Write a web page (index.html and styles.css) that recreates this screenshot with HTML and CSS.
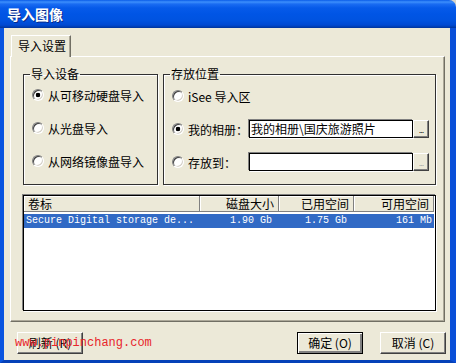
FILE: index.html
```html
<!DOCTYPE html>
<html lang="zh-CN">
<head>
<meta charset="utf-8">
<title>导入图像</title>
<link rel="stylesheet" href="styles.css">
</head>
<body>
<div class="window">
  <div class="titlebar"><span class="title">导入图像</span></div>
  <div class="client">
    <div class="tabs"><div class="tab">导入设置</div></div>
    <div class="panel">
      <div class="groups">
        <fieldset class="group g1">
          <legend>导入设备</legend>
          <div class="rows">
            <div class="row"><span class="rb checked"></span><span>从可移动硬盘导入</span></div>
            <div class="row"><span class="rb"></span><span>从光盘导入</span></div>
            <div class="row"><span class="rb"></span><span>从网络镜像盘导入</span></div>
          </div>
        </fieldset>
        <fieldset class="group g2">
          <legend>存放位置</legend>
          <div class="rows">
            <div class="row"><span class="rb"></span><span>iSee 导入区</span></div>
            <div class="row"><span class="rb checked"></span><span class="lbl">我的相册：</span><div class="field">我的相册\国庆旅游照片</div><div class="browse">...</div></div>
            <div class="row"><span class="rb"></span><span class="lbl">存放到：</span><div class="field"></div><div class="browse off">...</div></div>
          </div>
        </fieldset>
      </div>
      <div class="list">
        <div class="lhead">
          <div class="hc c1">卷标</div>
          <div class="hc c2">磁盘大小</div>
          <div class="hc c3">已用空间</div>
          <div class="hc c4">可用空间</div>
        </div>
        <div class="lrow sel">
          <div class="dc c1">Secure Digital storage de...</div>
          <div class="dc c2">1.90 Gb</div>
          <div class="dc c3">1.75 Gb</div>
          <div class="dc c4">161 Mb</div>
        </div>
      </div>
    </div>
    <div class="buttons">
      <div class="btn">刷新 (R)</div>
      <div class="right">
        <div class="btn def">确定 (O)</div>
        <div class="btn">取消 (C)</div>
      </div>
      <span class="watermark">www.pinpinchang.com</span>
    </div>
  </div>
</div>
</body>
</html>
```

FILE: styles.css
```css
html, body {
  margin: 0;
  padding: 0;
  background: #d8d4c8;
}
body {
  width: 456px;
  height: 363px;
  overflow: hidden;
  font-family: "Noto Sans CJK SC", "DejaVu Sans", sans-serif;
  font-size: 12px;
  color: #000;
}
.window {
  width: 456px;
  height: 363px;
  display: flex;
  flex-direction: column;
}
.titlebar {
  height: 28px;
  flex: none;
  border-top-right-radius: 7px;
  background: linear-gradient(to bottom, #0a5ce8 0, #3d8ffc 2px, #1a6cf2 4px, #065ae9 8px, #0055e5 14px, #0053e0 20px, #0049d2 25px, #003cb0 27px, #003399 28px);
  display: flex;
  align-items: center;
  padding-left: 7px;
}
.title {
  color: #fff;
  font-weight: bold;
  font-size: 14px;
  line-height: 16px;
  letter-spacing: 0;
  text-shadow: 1px 1px 0 #0a2a8a;
}
.client {
  flex: 1;
  background: #ece9d8;
  border-left: 4px solid #0a55e0;
  border-right: 6px solid #0a4fd8;
  border-bottom: 3px solid #0541b8;
  display: flex;
  flex-direction: column;
}
.tabs {
  display: flex;
  padding: 7px 0 0 7px;
}
.tab {
  position: relative;
  z-index: 1;
  width: 60px;
  height: 22px;
  margin-bottom: -1px;
  background: #ece9d8;
  border-left: 1px solid #fff;
  border-top: 1px solid #fff;
  border-right: 1px solid #716f64;
  box-shadow: inset -1px 0 0 #aca899;
  box-sizing: border-box;
  font-size: 12px;
  line-height: 20px;
  padding-left: 6px;
}
.panel {
  margin: 0 5px 0 6px;
  border-left: 1px solid #fff;
  border-top: 1px solid #fff;
  border-right: 1px solid #716f64;
  border-bottom: 1px solid #716f64;
  box-shadow: inset -1px -1px 0 #aca899;
  padding: 10px 8px 10px 12px;
}
.groups {
  display: flex;
  gap: 5px;
  height: 118px;
}
.group {
  margin: 0;
  padding: 0 0 0 8px;
  border: 1px solid #303030;
  box-shadow: 1px 1px 0 #fff, inset 1px 1px 0 #fff;
  min-width: 0;
  box-sizing: border-box;
}
.g1 { width: 135px; }
.g2 { width: 273px; }
legend {
  margin-left: -2px;
  padding: 0 1px;
  font-size: 12px;
  line-height: 14px;
}
.rows {
  display: flex;
  flex-direction: column;
  gap: 13px;
  padding-top: 4px;
}
.g2 .rows { padding-top: 5px; }
.row {
  height: 20px;
  display: flex;
  align-items: center;
  white-space: nowrap;
  font-size: 12px;
}
.rb {
  width: 12px;
  height: 12px;
  box-sizing: border-box;
  border-radius: 50%;
  border: 1px solid;
  border-color: #808080 #fff #fff #808080;
  box-shadow: inset 1px 1px 0 #404040, inset -1px -1px 0 #d4d0c8;
  background: #fff;
  margin-right: 4px;
  flex: none;
}
.rb.checked {
  background: radial-gradient(circle, #000 0, #000 2px, #fff 2.6px);
}
.lbl {
  width: 61px;
  flex: none;
}
.field {
  width: 164px;
  height: 18px;
  box-sizing: border-box;
  border: 1px solid #000;
  box-shadow: -1px -1px 0 #808080, 1px 1px 0 #fff;
  background: #fff;
  font-size: 12px;
  line-height: 16px;
  padding-left: 1px;
  overflow: hidden;
}
.browse {
  width: 16px;
  height: 18px;
  box-sizing: border-box;
  border: 1px solid;
  border-color: #fff #404040 #404040 #fff;
  box-shadow: inset -1px -1px 0 #808080;
  background: #ece9d8;
  font-family: "Liberation Sans", sans-serif;
  font-size: 9px;
  line-height: 18px;
  text-align: center;
  color: #000;
  letter-spacing: -1px;
}
.browse.off {
  color: #a0a0a0;
}
.list {
  margin-top: 10px;
  height: 116px;
  box-sizing: border-box;
  border: 1px solid #000;
  box-shadow: -1px -1px 0 #808080, 1px 1px 0 #fff;
  background: #fff;
}
.lhead {
  display: flex;
  height: 16px;
}
.hc {
  box-sizing: border-box;
  height: 16px;
  background: #ece9d8;
  border-right: 1px solid #808080;
  border-bottom: 1px solid #808080;
  box-shadow: inset 1px 1px 0 #fff;
  font-size: 12px;
  line-height: 15px;
  white-space: nowrap;
  overflow: hidden;
}
.c1 { width: 176px; }
.c2 { width: 79px; }
.c3 { width: 75px; }
.c4 { width: 80px; }
.hc.c1 { padding-left: 4px; }
.hc.c2, .hc.c3, .hc.c4 { text-align: right; padding-right: 4px; }
.lrow {
  display: flex;
  height: 14px;
  margin-top: 2px;
  width: 410px;
}
.lrow.sel {
  background: #316ac5;
  color: #fff;
}
.dc {
  box-sizing: border-box;
  font-family: "Liberation Mono", monospace;
  font-size: 10px;
  line-height: 14px;
  white-space: nowrap;
  overflow: hidden;
}
.dc.c1 { padding-left: 2px; }
.dc.c2, .dc.c3 { text-align: right; padding-right: 7px; }
.dc.c4 { text-align: right; padding-right: 2px; }
.buttons {
  position: relative;
  display: flex;
  justify-content: space-between;
  margin-top: 10px;
  padding: 0 4px 0 13px;
}
.right {
  display: flex;
  gap: 17px;
}
.btn {
  width: 66px;
  height: 22px;
  box-sizing: border-box;
  border: 1px solid;
  border-color: #fff #404040 #404040 #fff;
  box-shadow: inset -1px -1px 0 #808080;
  background: #ece9d8;
  text-align: center;
  font-size: 12px;
  line-height: 20px;
  white-space: nowrap;
}
.btn.def {
  border: 1px solid #000;
  box-shadow: inset 1px 1px 0 #fff, inset -2px -2px 0 #808080;
}
.watermark {
  position: absolute;
  left: 11px;
  top: 0;
  line-height: 22px;
  font-family: "Liberation Mono", monospace;
  font-size: 12px;
  color: #e8252b;
  pointer-events: none;
}
```
